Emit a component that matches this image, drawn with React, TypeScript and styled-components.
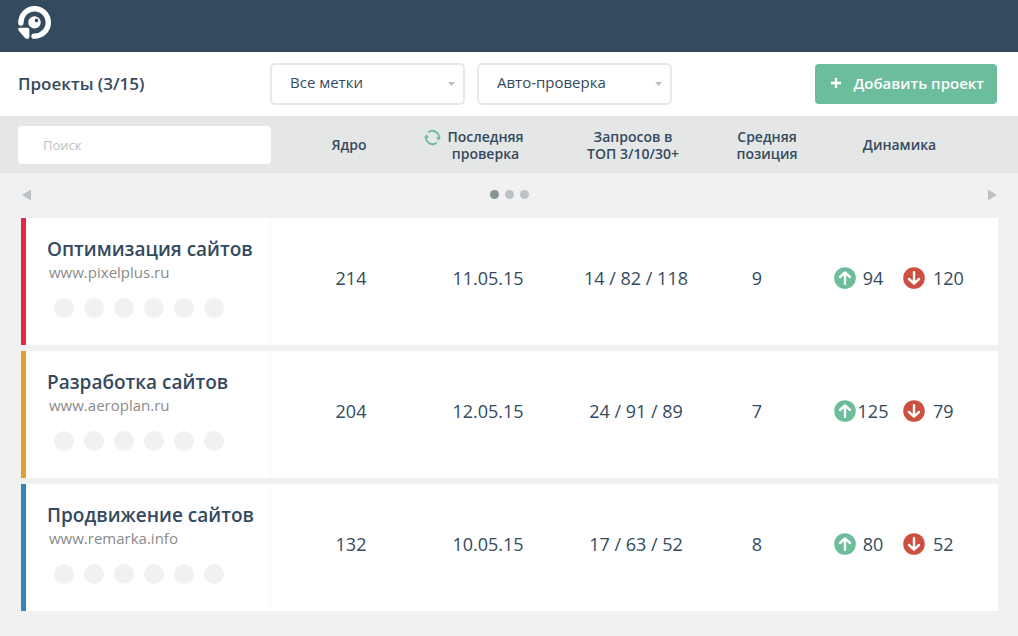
import React from "react";
import styled, { createGlobalStyle } from "styled-components";

const ink = "#344a5e";
const green = "#6bbd9b";
const red = "#cd4f41";

const GlobalStyle = createGlobalStyle`
  *, *::before, *::after { box-sizing: border-box; }
  body {
    margin: 0;
    background: #f1f1f1;
    color: ${ink};
    font-family: "Open Sans", "Noto Sans", sans-serif;
  }
  button, input, select { font: inherit; color: inherit; }
`;

const TopBar = styled.header`
  display: flex;
  align-items: center;
  height: 52px;
  padding: 0 18px 6px;
  background: ${ink};
`;

const HomeLink = styled.a`
  display: block;
  height: 34px;
`;

const Toolbar = styled.div`
  display: flex;
  align-items: center;
  height: 64px;
  padding: 0 21px 0 18px;
  background: #fff;
`;

const PageTitle = styled.h1`
  flex: 0 0 252px;
  margin: 0;
  font-size: 17px;
  font-weight: 600;
  line-height: 24px;
`;

const Filters = styled.div`
  display: flex;
  gap: 12px;
`;

const SelectBox = styled.div`
  display: grid;
  align-items: center;
  width: 195px;

  > * { grid-area: 1 / 1; }
  > svg {
    justify-self: end;
    margin-right: 10px;
    pointer-events: none;
  }
`;

const Select = styled.select`
  appearance: none;
  width: 100%;
  height: 42px;
  padding: 0 24px 4px 18px;
  border: 2px solid #e8e8e8;
  border-radius: 5px;
  background: #fff;
  font-size: 15px;
`;

const AddButton = styled.button`
  display: flex;
  align-items: center;
  gap: 12px;
  height: 40px;
  margin-left: auto;
  padding: 0 13px 2px 16px;
  border: 0;
  border-radius: 4px;
  background: ${green};
  color: #fff;
  font-size: 15px;
  font-weight: 600;
  white-space: nowrap;
`;

const ProjectTable = styled.table`
  display: block;
  width: 100%;
`;

const columns = "146fr 140fr 172fr 76fr 193fr";

const TableHead = styled.thead`
  display: block;
  background: #e5e7e6;
`;

const HeadRow = styled.tr`
  display: grid;
  grid-template-columns: 253px ${columns};
  align-items: center;
  height: 57px;
  padding: 0 20px 0 18px;
`;

const HeadCell = styled.th<{ $left?: number; $right?: number }>`
  display: flex;
  justify-content: center;
  gap: 6px;
  padding: 0 ${(p) => p.$right ?? 0}px 0 ${(p) => p.$left ?? 0}px;
  font-size: 14px;
  font-weight: 600;
  line-height: 17px;
  text-align: center;
  white-space: nowrap;

  > svg { margin-top: 1px; }
`;

const Search = styled.input`
  width: 100%;
  height: 38px;
  padding: 0 25px;
  border: 0;
  border-radius: 4px;
  background: #fff;
  font-size: 13px;
  font-weight: 400;

  &::placeholder { color: #bcbfc1; opacity: 1; }
`;

const TableBody = styled.tbody`
  display: flex;
  flex-direction: column;
  gap: 6px;
  padding: 0 20px 24px 21px;
`;

const PagerBody = styled.tbody`
  display: block;
`;

const PagerRow = styled.tr`
  display: block;
`;

const PagerCell = styled.td`
  display: flex;
  align-items: center;
  justify-content: space-between;
  height: 45px;
  padding: 0 21px 2px 22px;
`;

const PagerButton = styled.button`
  display: flex;
  padding: 0;
  border: 0;
  background: none;
`;

const Dots = styled.div`
  display: flex;
  gap: 6px;
`;

const Dot = styled.button<{ $active?: boolean }>`
  width: 9px;
  height: 9px;
  padding: 0;
  border: 0;
  border-radius: 50%;
  background: ${(p) => (p.$active ? "#849595" : "#bcc2c6")};
`;

const Row = styled.tr<{ $accent: string }>`
  display: grid;
  grid-template-columns: 250px ${columns};
  height: 127px;
  background: #fff;
  box-shadow: inset 5px 0 ${(p) => p.$accent};
`;

const ProjectCell = styled.th`
  padding: 19px 0 0 26px;
  border-right: 1px solid #f8f8f8;
  text-align: left;
  white-space: nowrap;
`;

const ProjectName = styled.div`
  font-size: 19px;
  font-weight: 600;
  line-height: 25px;
`;

const Site = styled.a`
  display: block;
  padding-left: 2px;
  color: #8a8a8a;
  font-size: 15px;
  font-weight: 400;
  line-height: 20px;
  text-decoration: none;
`;

const Tags = styled.div`
  display: flex;
  gap: 10px;
  margin-top: 16px;
  padding-left: 7px;
`;

const Tag = styled.span`
  width: 20px;
  height: 20px;
  border-radius: 50%;
  background: #f1f1f1;
`;

const Cell = styled.td<{ $left?: number; $right?: number }>`
  display: flex;
  align-items: center;
  justify-content: center;
  padding: 0 ${(p) => p.$right ?? 0}px 8px ${(p) => p.$left ?? 0}px;
  font-size: 18px;
  line-height: 24px;
  white-space: nowrap;
`;

const TrendCell = styled(Cell)`
  justify-content: flex-start;
`;

const Gain = styled.span`
  width: 34px;
  margin-right: 13px;
  text-align: center;
`;

const Loss = styled.span`
  margin-left: 8px;
`;

const Logo = () => (
  <svg width="34" height="34" viewBox="0 0 34 34" role="img" aria-label="Pixel Plus">
    <path
      d="M2.9 17 A13.7 13.7 0 1 1 16 30.1"
      fill="none"
      stroke="#fff"
      strokeWidth="5.4"
      strokeLinecap="round"
    />
    <path
      d="M1.6 21.8 H9.6 Q11.4 21.8 11.4 23.6 V30.8 Q11.4 33.4 8.8 32.8 Q7.6 32.6 6.6 31.4 L.8 24.8 Q-.8 22.2 1.6 21.8Z"
      fill="#fff"
    />
    <circle cx="16.5" cy="16.4" r="6.2" fill="#fff" />
    <circle cx="18.5" cy="14.4" r="1.8" fill={ink} />
  </svg>
);

const Caret = () => (
  <svg width="7" height="4" viewBox="0 0 7 4" aria-hidden="true">
    <path d="M0 0H7L3.5 4Z" fill="#bcbfc2" />
  </svg>
);

const Plus = () => (
  <svg width="10" height="10" viewBox="0 0 10 10" aria-hidden="true">
    <path d="M5 0V10M0 5H10" stroke="#fff" strokeWidth="2.4" />
  </svg>
);

const Refresh = () => (
  <svg width="17" height="17" viewBox="0 0 17 17" aria-hidden="true">
    <g fill="none" stroke={green} strokeWidth="1.8">
      <path d="M4.2 3.4A6.6 6.6 0 0 1 15 9" />
      <path d="M12.8 13.6A6.6 6.6 0 0 1 2 8" />
    </g>
    <path d="M12 8.2H17L14.6 11.8Z M0 8.8H5L2.4 5.2Z" fill={green} />
  </svg>
);

const Triangle = ({ flip }: { flip?: boolean }) => (
  <svg width="9" height="12" viewBox="0 0 9 12" aria-hidden="true">
    <path d={flip ? "M0 .5L9 6L0 11.5Z" : "M9 .5L0 6L9 11.5Z"} fill="#bcc2c6" />
  </svg>
);

const TrendIcon = ({ down }: { down?: boolean }) => (
  <svg width="22" height="22" viewBox="0 0 22 22" role="img" aria-label={down ? "Снижение" : "Рост"}>
    <circle cx="11" cy="11" r="10.8" fill={down ? red : green} />
    <path
      d={down ? "M11 5.2V16M6 12L11 16.6L16 12" : "M11 16.8V6M6 10L11 5.4L16 10"}
      fill="none"
      stroke="#fff"
      strokeWidth="2.4"
      strokeLinecap="round"
      strokeLinejoin="round"
    />
  </svg>
);

const projects = [
  { name: "Оптимизация сайтов", site: "www.pixelplus.ru", accent: "#e82747", core: 214, date: "11.05.15", top: "14 / 82 / 118", position: 9, up: 94, down: 120 },
  { name: "Разработка сайтов", site: "www.aeroplan.ru", accent: "#e2a02c", core: 204, date: "12.05.15", top: "24 / 91 / 89", position: 7, up: 125, down: 79 },
  { name: "Продвижение сайтов", site: "www.remarka.info", accent: "#3187b8", core: 132, date: "10.05.15", top: "17 / 63 / 52", position: 8, up: 80, down: 52 },
];

const tagSlots = [0, 1, 2, 3, 4, 5];

export default function App() {
  return (
    <>
      <GlobalStyle />
      <TopBar>
        <HomeLink href="#">
          <Logo />
        </HomeLink>
      </TopBar>
      <main>
        <Toolbar>
          <PageTitle>Проекты (3/15)</PageTitle>
          <Filters>
            <SelectBox>
              <Select aria-label="Метки">
                <option>Все метки</option>
              </Select>
              <Caret />
            </SelectBox>
            <SelectBox>
              <Select aria-label="Проверка">
                <option>Авто-проверка</option>
              </Select>
              <Caret />
            </SelectBox>
          </Filters>
          <AddButton type="button">
            <Plus />
            Добавить проект
          </AddButton>
        </Toolbar>
        <ProjectTable>
          <TableHead>
            <HeadRow>
              <HeadCell scope="col">
                <Search type="search" placeholder="Поиск" aria-label="Поиск" />
              </HeadCell>
              <HeadCell scope="col" $left={10}>Ядро</HeadCell>
              <HeadCell scope="col" $right={26}>
                <Refresh />
                <span>Последняя<br />проверка</span>
              </HeadCell>
              <HeadCell scope="col" $right={20}>
                <span>Запросов в<br />ТОП 3/10/30+</span>
              </HeadCell>
              <HeadCell scope="col">
                <span>Средняя<br />позиция</span>
              </HeadCell>
              <HeadCell scope="col" $right={4}>Динамика</HeadCell>
            </HeadRow>
          </TableHead>
          <PagerBody>
            <PagerRow>
              <PagerCell colSpan={6}>
                <PagerButton type="button" aria-label="Назад">
                  <Triangle />
                </PagerButton>
                <Dots>
                  <Dot type="button" aria-label="Страница 1" $active />
                  <Dot type="button" aria-label="Страница 2" />
                  <Dot type="button" aria-label="Страница 3" />
                </Dots>
                <PagerButton type="button" aria-label="Вперёд">
                  <Triangle flip />
                </PagerButton>
              </PagerCell>
            </PagerRow>
          </PagerBody>
          <TableBody>
            {projects.map((p) => (
              <Row key={p.site} $accent={p.accent}>
                <ProjectCell scope="row">
                  <ProjectName>{p.name}</ProjectName>
                  <Site href="#">{p.site}</Site>
                  <Tags>
                    {tagSlots.map((slot) => (
                      <Tag key={slot} />
                    ))}
                  </Tags>
                </ProjectCell>
                <Cell $left={14}>{p.core}</Cell>
                <Cell $left={2}>{p.date}</Cell>
                <Cell $right={14}>{p.top}</Cell>
                <Cell $right={20}>{p.position}</Cell>
                <TrendCell $left={29}>
                  <TrendIcon />
                  <Gain>{p.up}</Gain>
                  <TrendIcon down />
                  <Loss>{p.down}</Loss>
                </TrendCell>
              </Row>
            ))}
          </TableBody>
        </ProjectTable>
      </main>
    </>
  );
}
